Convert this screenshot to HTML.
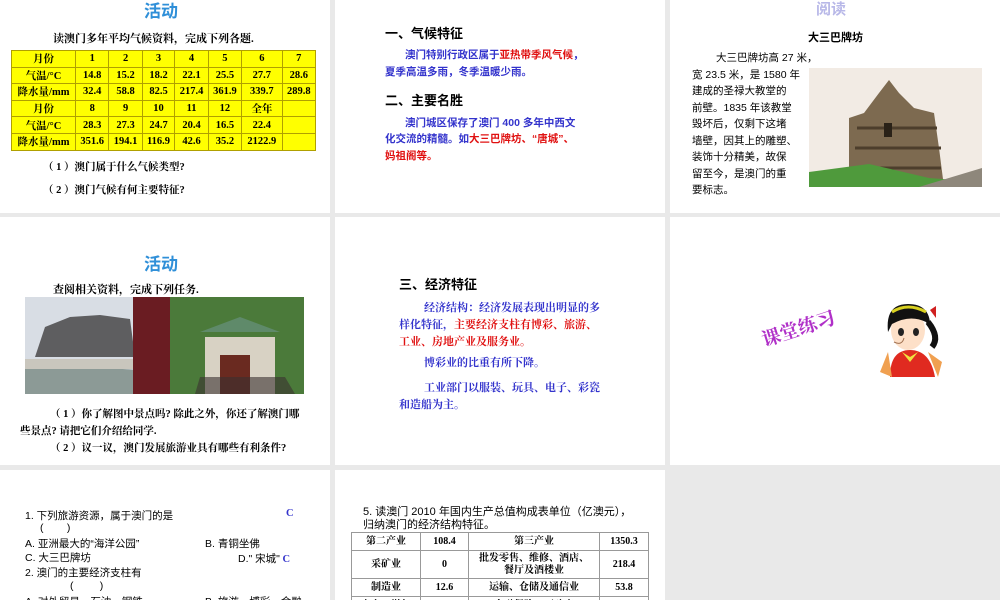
<!DOCTYPE html>
<html><head><meta charset="utf-8"><style>
*{margin:0;padding:0;box-sizing:border-box}
body{width:1000px;height:600px;background:#e9e9e9;position:relative;overflow:hidden;font-family:"Liberation Serif","Noto Serif CJK SC",serif;color:#000}
.s{position:absolute;background:#fff;overflow:hidden}
.a{position:absolute;white-space:nowrap}
.h{font-family:"Liberation Sans","Noto Sans CJK SC",sans-serif}
.blue{color:#3333cc}.red{color:#e01010}
table{border-collapse:collapse;position:absolute}
.t1 td{border:1px solid #b0a000;background:#ffff00;font-weight:bold;font-size:10.5px;text-align:center;height:16.6px;padding:0}
.t2 td{border:1px solid #999;font-weight:bold;font-size:10px;text-align:center;padding:0;line-height:12px}
</style></head><body>

<!-- slide 1 -->
<div class="s" style="left:0;top:0;width:330px;height:213px">
 <div class="a h" style="left:144px;top:-3px;font-size:17px;color:#2f8fd8;font-weight:bold">活动</div>
 <div class="a" style="left:53px;top:30px;font-size:11px;font-weight:bold">读澳门多年平均气候资料，完成下列各题.</div>
 <table class="t1" style="left:11px;top:50px;width:305px">
  <tr><td style="width:64px">月份</td><td>1</td><td>2</td><td>3</td><td>4</td><td>5</td><td>6</td><td>7</td></tr>
  <tr><td>气温/°C</td><td>14.8</td><td>15.2</td><td>18.2</td><td>22.1</td><td>25.5</td><td>27.7</td><td>28.6</td></tr>
  <tr><td>降水量/mm</td><td>32.4</td><td>58.8</td><td>82.5</td><td>217.4</td><td>361.9</td><td>339.7</td><td>289.8</td></tr>
  <tr><td>月份</td><td>8</td><td>9</td><td>10</td><td>11</td><td>12</td><td>全年</td><td></td></tr>
  <tr><td>气温/°C</td><td>28.3</td><td>27.3</td><td>24.7</td><td>20.4</td><td>16.5</td><td>22.4</td><td></td></tr>
  <tr><td>降水量/mm</td><td>351.6</td><td>194.1</td><td>116.9</td><td>42.6</td><td>35.2</td><td>2122.9</td><td></td></tr>
 </table>
 <div class="a" style="left:43px;top:159px;font-size:10.5px;font-weight:bold">（ 1 ）澳门属于什么气候类型?</div>
 <div class="a" style="left:43px;top:182px;font-size:10.5px;font-weight:bold">（ 2 ）澳门气候有何主要特征?</div>
</div>

<!-- slide 2 -->
<div class="s" style="left:335px;top:0;width:330px;height:213px">
 <div class="a h" style="left:50px;top:23px;font-size:13px;font-weight:bold">一、气候特征</div>
 <div class="a h blue" style="left:70px;top:47px;font-size:10.5px;font-weight:bold">澳门特别行政区属于<span class="red">亚热带季风气候</span>，</div>
 <div class="a h blue" style="left:50px;top:64px;font-size:10.5px;font-weight:bold">夏季高温多雨，冬季温暖少雨。</div>
 <div class="a h" style="left:50px;top:90px;font-size:13px;font-weight:bold">二、主要名胜</div>
 <div class="a h blue" style="left:70px;top:115px;font-size:10.5px;font-weight:bold">澳门城区保存了澳门 400 多年中西文</div>
 <div class="a h blue" style="left:50px;top:131px;font-size:10.5px;font-weight:bold">化交流的精髓。如<span class="red">大三巴牌坊、“唐城”、</span></div>
 <div class="a h red" style="left:50px;top:148px;font-size:10.5px;font-weight:bold">妈祖阁等。</div>
</div>

<!-- slide 3 -->
<div class="s" style="left:670px;top:0;width:330px;height:213px">
 <div class="a h" style="left:146px;top:-2px;font-size:15px;color:#b8b8e8;font-weight:bold">阅读</div>
 <div class="a h" style="left:138px;top:29px;font-size:11px;font-weight:bold">大三巴牌坊</div>
 <div class="h" style="position:absolute;left:22px;top:50px;font-size:10.5px;line-height:16.5px;white-space:nowrap">
  <div style="padding-left:24px">大三巴牌坊高 27 米，</div>
  <div>宽 23.5 米，是 1580 年</div>
  <div>建成的圣禄大教堂的</div>
  <div>前壁。1835 年该教堂</div>
  <div>毁坏后，仅剩下这堵</div>
  <div>墙壁，因其上的雕塑、</div>
  <div>装饰十分精美，故保</div>
  <div>留至今，是澳门的重</div>
  <div>要标志。</div>
 </div>
 <svg style="position:absolute;left:139px;top:68px" width="173" height="119">
  <rect width="173" height="119" fill="#f2ebe4"/>
  <path d="M40 119 V50 L55 45 L70 25 L80 12 L90 25 L105 40 L125 45 L130 80 L135 119Z" fill="#7d6a50"/>
  <path d="M48 60h80M46 80h86M44 100h88" stroke="#4d3e2c" stroke-width="3"/>
  <rect x="75" y="55" width="8" height="14" fill="#2a2218"/>
  <path d="M0 119 V104 L60 96 L120 110 L173 114 V119Z" fill="#4f9a3c"/>
  <path d="M110 119 L173 100 V119Z" fill="#8e877b"/>
 </svg>
</div>

<!-- slide 4 -->
<div class="s" style="left:0;top:217px;width:330px;height:248px">
 <div class="a h" style="left:144px;top:33px;font-size:17px;color:#2f8fd8;font-weight:bold">活动</div>
 <div class="a" style="left:53px;top:64px;font-size:11px;font-weight:bold">查阅相关资料，完成下列任务.</div>
 <svg style="position:absolute;left:25px;top:80px" width="279" height="97">
  <rect width="145" height="97" fill="#d8dde4"/>
  <path d="M10 60 L20 30 L45 20 L75 18 L105 22 L110 60Z" fill="#5e5e60"/>
  <path d="M0 65 L140 75 L140 97 L0 97Z" fill="#8c9a96"/>
  <path d="M0 62 H140 V72 H0Z" fill="#c9c6bd"/>
  <rect x="108" y="0" width="37" height="97" fill="#6a1c22"/>
  <rect x="145" y="0" width="134" height="97" fill="#4b7a3a"/>
  <path d="M180 40 H250 V97 H180Z" fill="#d8d2c4"/>
  <path d="M175 35 L215 20 L255 35Z" fill="#5f8a6a"/>
  <rect x="195" y="58" width="30" height="39" fill="#6a2a20"/>
  <path d="M170 97 L175 80 L260 80 L270 97Z" fill="#3a3030" opacity=".6"/>
 </svg>
 <div class="a" style="left:50px;top:189px;font-size:10.5px;font-weight:bold">（ 1 ）你了解图中景点吗? 除此之外，你还了解澳门哪</div>
 <div class="a" style="left:20px;top:206px;font-size:10.5px;font-weight:bold">些景点? 请把它们介绍给同学.</div>
 <div class="a" style="left:50px;top:223px;font-size:10.5px;font-weight:bold">（ 2 ）议一议，澳门发展旅游业具有哪些有利条件?</div>
</div>

<!-- slide 5 -->
<div class="s" style="left:335px;top:217px;width:330px;height:248px">
 <div class="a h" style="left:64px;top:57px;font-size:13px;font-weight:bold">三、经济特征</div>
 <div class="a blue" style="left:89px;top:82px;font-size:11px;font-weight:bold">经济结构：经济发展表现出明显的多</div>
 <div class="a blue" style="left:64px;top:99px;font-size:11px;font-weight:bold">样化特征，<span class="red">主要经济支柱有博彩、旅游、</span></div>
 <div class="a red" style="left:64px;top:116px;font-size:11px;font-weight:bold">工业、房地产业及服务业。</div>
 <div class="a blue" style="left:89px;top:137px;font-size:11px;font-weight:bold">博彩业的比重有所下降。</div>
 <div class="a blue" style="left:89px;top:162px;font-size:11px;font-weight:bold">工业部门以服装、玩具、电子、彩瓷</div>
 <div class="a blue" style="left:64px;top:179px;font-size:11px;font-weight:bold">和造船为主。</div>
</div>

<!-- slide 6 -->
<div class="s" style="left:670px;top:217px;width:330px;height:248px">
 <div class="a" style="left:92px;top:109px;font-size:19px;color:#b030c8;font-weight:bold;transform:rotate(-18deg);transform-origin:left center;font-family:'Liberation Serif','Noto Serif CJK SC',serif">课堂练习</div>
 <svg style="position:absolute;left:210px;top:85px" width="65" height="85">
  <path d="M10 75 Q10 48 30 48 Q50 48 55 75Z" fill="#e02a20"/>
  <path d="M0 70 L8 50 L12 75Z M48 50 L62 60 L58 75Z" fill="#f0a050"/>
  <path d="M22 50 L30 60 L38 50 L30 55Z" fill="#f0e040"/>
  <ellipse cx="28" cy="28" rx="17" ry="20" fill="#fde0c8"/>
  <path d="M8 30 Q5 2 28 2 Q52 2 50 28 L46 20 Q30 12 12 22Z" fill="#111"/>
  <path d="M48 20 Q60 35 52 45" stroke="#111" stroke-width="6" fill="none"/>
  <path d="M12 10 Q28 0 46 10" stroke="#d8d020" stroke-width="3" fill="none"/>
  <path d="M50 8 L56 4 L56 16Z" fill="#d02020"/>
  <ellipse cx="21" cy="30" rx="3" ry="4" fill="#222"/><ellipse cx="36" cy="30" rx="3" ry="4" fill="#222"/>
  <path d="M14 40 Q22 44 24 36" fill="#fde0c8" stroke="#a07050"/>
 </svg>
</div>

<!-- slide 7 -->
<div class="s h" style="left:0;top:470px;width:330px;height:130px;font-size:10.5px">
 <div class="a" style="left:25px;top:38px">1. 下列旅游资源，属于澳门的是</div>
 <div class="a blue" style="left:286px;top:38px;font-family:'Liberation Serif',serif;font-weight:bold">C</div>
 <div class="a" style="left:40px;top:52px">(&nbsp;&nbsp;&nbsp;&nbsp;&nbsp;&nbsp;&nbsp;&nbsp;)</div>
 <div class="a" style="left:25px;top:66px">A. 亚洲最大的“海洋公园”</div>
 <div class="a" style="left:205px;top:66px">B. 青铜坐佛</div>
 <div class="a" style="left:25px;top:80px">C. 大三巴牌坊</div>
 <div class="a" style="left:238px;top:81px">D." 宋城"<span class="blue" style="font-family:'Liberation Serif',serif;font-weight:bold"> C</span></div>
 <div class="a" style="left:25px;top:95px">2. 澳门的主要经济支柱有</div>
 <div class="a" style="left:70px;top:110px">(&nbsp;&nbsp;&nbsp;&nbsp;&nbsp;&nbsp;&nbsp;&nbsp;&nbsp;)</div>
 <div class="a" style="left:25px;top:124px">A. 对外贸易、石油、钢铁</div>
 <div class="a" style="left:205px;top:124px">B. 旅游、博彩、金融</div>
</div>

<!-- slide 8 -->
<div class="s h" style="left:335px;top:470px;width:330px;height:130px">
 <div class="a" style="left:28px;top:33px;font-size:11px">5. 读澳门 2010 年国内生产总值构成表单位（亿澳元），</div>
 <div class="a" style="left:28px;top:46px;font-size:11px">归纳澳门的经济结构特征。</div>
 <table class="t2" style="left:16px;top:62px;width:298px;font-family:'Liberation Serif','Noto Serif CJK SC',serif">
  <tr style="height:18px"><td style="width:69px">第二产业</td><td style="width:48px">108.4</td><td style="width:131px">第三产业</td><td>1350.3</td></tr>
  <tr style="height:28px"><td>采矿业</td><td>0</td><td>批发零售、维修、酒店、<br>餐厅及酒楼业</td><td>218.4</td></tr>
  <tr style="height:18px"><td>制造业</td><td>12.6</td><td>运输、仓储及通信业</td><td>53.8</td></tr>
  <tr style="height:18px"><td>电力、燃气</td><td>20.1</td><td>金融保险、不动产</td><td>300.2</td></tr>
 </table>
</div>

</body></html>
